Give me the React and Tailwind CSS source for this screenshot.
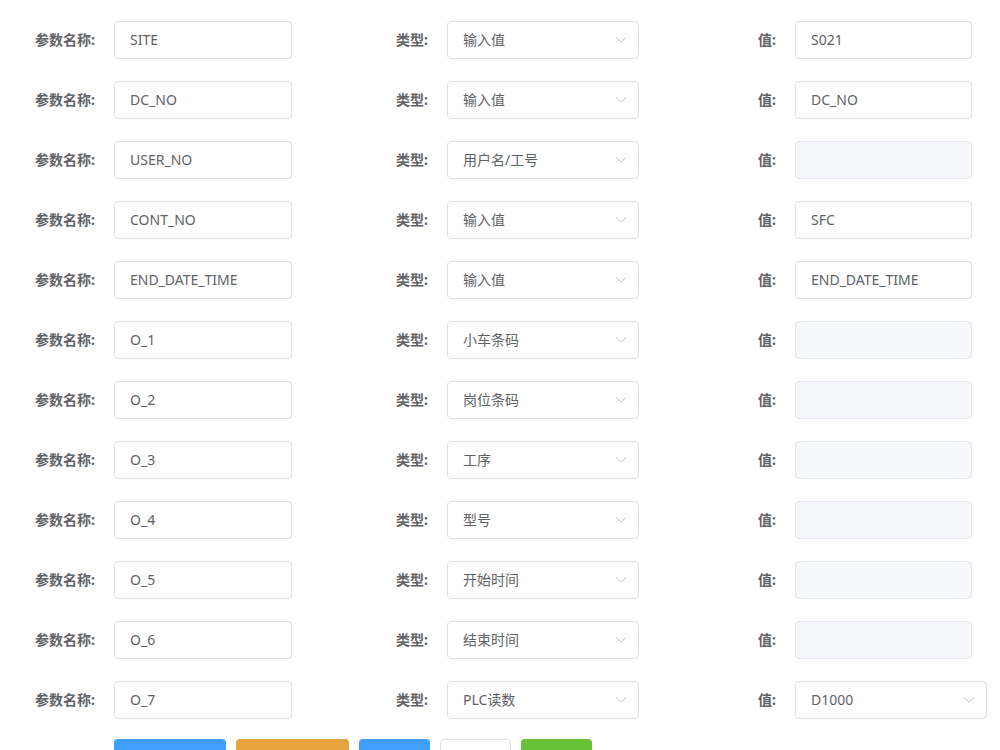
import React from 'react';

const rows = [
  { name: 'SITE', type: '输入值', value: 'S021' },
  { name: 'DC_NO', type: '输入值', value: 'DC_NO' },
  { name: 'USER_NO', type: '用户名/工号', value: null },
  { name: 'CONT_NO', type: '输入值', value: 'SFC' },
  { name: 'END_DATE_TIME', type: '输入值', value: 'END_DATE_TIME' },
  { name: 'O_1', type: '小车条码', value: null },
  { name: 'O_2', type: '岗位条码', value: null },
  { name: 'O_3', type: '工序', value: null },
  { name: 'O_4', type: '型号', value: null },
  { name: 'O_5', type: '开始时间', value: null },
  { name: 'O_6', type: '结束时间', value: null },
  { name: 'O_7', type: 'PLC读数', value: 'D1000', valueSelect: true },
];

function Arrow() {
  return (
    <svg width="12" height="8" viewBox="0 0 12 8" className="absolute right-[11px] top-1/2 -translate-y-1/2">
      <polyline points="1,1.5 6,6 11,1.5" fill="none" stroke="#c0c4cc" strokeWidth="1" />
    </svg>
  );
}

function Label({ text }) {
  return (
    <div className="w-[114px] shrink-0 pr-[19px] pb-[1px] text-right text-[14px] font-bold text-[#606266]">{text}</div>
  );
}

function Input({ text, disabled, select, w }) {
  return (
    <div
      className={`relative h-[38px] ${w} rounded-[4px] border flex items-center pl-[15px] pb-[2px] text-[14px] ${
        disabled ? 'bg-[#f5f7fa] border-[#e4e7ed]' : 'bg-white border-[#dcdfe6]'
      } text-[#606266]`}
    >
      {text}
      {select && <Arrow />}
    </div>
  );
}

export default function App() {
  return (
    <div
      className="bg-white w-[1000px] pt-[21px]"
      style={{ fontFamily: '"Noto Sans", "Noto Sans CJK SC", sans-serif' }}
    >
      {rows.map((r) => (
        <div key={r.name} className="grid grid-cols-[333px_348px_1fr] mb-[22px]">
          <div className="flex items-center">
            <Label text="参数名称:" />
            <Input text={r.name} w="w-[178px]" />
          </div>
          <div className="flex items-center">
            <Label text="类型:" />
            <Input text={r.type} w="w-[192px]" select />
          </div>
          <div className="flex items-center">
            <Label text="值:" />
            {r.valueSelect ? (
              <Input text={r.value} w="w-[192px]" select />
            ) : (
              <Input text={r.value} w="w-[177px]" disabled={r.value === null} />
            )}
          </div>
        </div>
      ))}
      <div className="flex gap-[10px] pl-[114px] -mt-[2px] pb-6">
        <button aria-label="新增参数" className="h-[40px] w-[112px] rounded-[4px] bg-[#409eff]" />
        <button aria-label="删除参数" className="h-[40px] w-[113px] rounded-[4px] bg-[#e6a23c]" />
        <button aria-label="保存" className="h-[40px] w-[71px] rounded-[4px] bg-[#409eff]" />
        <button aria-label="取消" className="h-[40px] w-[71px] rounded-[4px] bg-white border border-[#dcdfe6]" />
        <button aria-label="测试" className="h-[40px] w-[71px] rounded-[4px] bg-[#67c23a]" />
      </div>
    </div>
  );
}
